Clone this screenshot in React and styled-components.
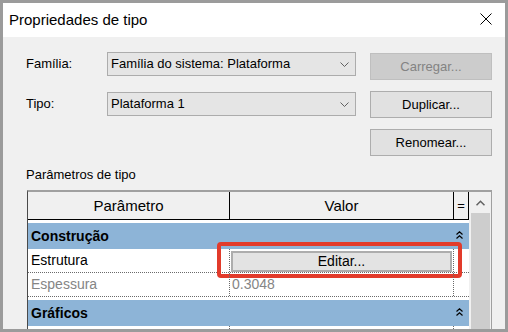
import React from 'react';
import styled, { createGlobalStyle } from 'styled-components';

const GlobalStyle = createGlobalStyle`
  html, body { margin: 0; padding: 0; background: #ffffff; }
  body { font-family: "Liberation Sans", Arial, sans-serif; }
  *, *::before, *::after { box-sizing: border-box; }
`;

const Window = styled.div`
  width: 508px;
  height: 332px;
  border: 3px solid #9b9b9b;
  background: #f0f0f0;
  display: flex;
  flex-direction: column;
  overflow: hidden;
  color: #000;
`;

const TitleBar = styled.div`
  height: 34px;
  flex: none;
  background: #ffffff;
  display: flex;
  align-items: center;
  justify-content: space-between;
  padding: 0 13px 0 6px;
`;

const Title = styled.span`
  font-size: 15px;
  line-height: 34px;
`;

const CloseIcon = styled.svg`
  width: 12px;
  height: 12px;
  display: block;
  margin-top: -2px;
`;

const Body = styled.div`
  flex: 1;
  min-height: 0;
  overflow: hidden;
  padding: 0 13px 0 23px;
`;

const TopArea = styled.div`
  display: flex;
  align-items: flex-start;
`;

const FieldGrid = styled.div`
  display: grid;
  grid-template-columns: 81px 249px;
  row-gap: 16px;
  padding-top: 15px;
  align-items: center;
`;

const FieldLabel = styled.span`
  font-size: 13px;
  line-height: 16px;
`;

const Select = styled.div`
  height: 24px;
  border: 1px solid #acacac;
  background: #e5e5e5;
  display: flex;
  align-items: center;
  justify-content: space-between;
  padding: 0 6px 0 3px;
  font-size: 13px;
  line-height: 16px;
`;

const Chevron = styled.svg`
  width: 9px;
  height: 5px;
  display: block;
`;

const ButtonColumn = styled.div`
  margin-left: 14px;
  padding-top: 16px;
  display: flex;
  flex-direction: column;
  gap: 11px;
  width: 124px;
`;

const DialogButton = styled.button`
  height: 27px;
  width: 100%;
  padding: 0;
  border: 1px solid ${(p) => (p.disabled ? '#bfbfbf' : '#adadad')};
  background: ${(p) => (p.disabled ? '#cccccc' : '#e1e1e1')};
  color: ${(p) => (p.disabled ? '#838383' : '#000000')};
  font-family: "Liberation Sans", Arial, sans-serif;
  font-size: 13px;
  line-height: 16px;
`;

const SectionLabel = styled.div`
  margin-top: 11px;
  font-size: 13px;
  line-height: 16px;
`;

const Table = styled.div`
  margin: 7px 0 0 1px;
  width: 465px;
  height: 200px;
  border-top: 2px solid #a0a0a0;
  border-left: 1px solid #4a4a4a;
  border-right: 1px solid #a0a0a0;
  display: flex;
  background: #ffffff;
`;

const Grid = styled.div`
  width: 441px;
  flex: none;
  background: #ffffff;
`;

const COLS = '202px 224px 15px';

const HeaderRow = styled.div`
  display: grid;
  grid-template-columns: ${COLS};
  height: 28px;
  border-bottom: 1px solid #000;
  background: #f0f0f0;
`;

const HeaderCell = styled.div`
  display: flex;
  align-items: center;
  justify-content: center;
  font-size: ${(p) => (p.small ? '13px' : '15px')};
  border-right: 1px solid #000;
`;

const GroupRow = styled.div`
  margin-top: 3px;
  height: 26px;
  background: #8db4d7;
  display: flex;
  align-items: center;
  justify-content: space-between;
  padding: 0 6px 0 3px;
  font-size: 14px;
  font-weight: bold;
`;

const CollapseIcon = styled.svg`
  width: 7px;
  height: 8px;
  display: block;
  margin-top: -2px;
`;

const DataRow = styled.div`
  position: relative;
  display: grid;
  grid-template-columns: ${COLS};
  height: 24px;
  border-bottom: 1px dotted #6a6a6a;
`;

const DataCell = styled.div`
  font-size: 14px;
  line-height: 23px;
  white-space: nowrap;
  overflow: hidden;
  color: ${(p) => (p.muted ? '#858585' : '#000000')};
  padding: ${(p) => p.pad || '0'};
  border-right: ${(p) => (p.last ? 'none' : '1px dotted #6a6a6a')};
`;

const EditButton = styled.button`
  width: 100%;
  height: 21px;
  padding: 0;
  border: 2px solid #adadad;
  background: #e3e3e3;
  font-family: "Liberation Sans", Arial, sans-serif;
  font-size: 14px;
  line-height: 16px;
  color: #000;
`;

const Highlight = styled.div`
  position: absolute;
  left: 189px;
  top: -7px;
  width: 245px;
  height: 36px;
  border: 4px solid #e23b2b;
  border-radius: 4px;
  pointer-events: none;
`;

const Scrollbar = styled.div`
  width: 22px;
  flex: none;
  background: #f0f0f0;
  display: flex;
  flex-direction: column;
`;

const ScrollArrow = styled.div`
  height: 21px;
  display: flex;
  align-items: center;
  justify-content: center;
  padding-left: 1px;
`;

const ScrollThumb = styled.div`
  margin: 0 1px 0 2px;
  flex: 1;
  background: #cdcdcd;
`;

const Caret = () => (
  <CollapseIcon viewBox="0 0 7 8">
    <polyline points="0.5,3.5 3.5,0.8 6.5,3.5" fill="none" stroke="#000" strokeWidth="1.2" />
    <polyline points="0.5,7.5 3.5,4.8 6.5,7.5" fill="none" stroke="#000" strokeWidth="1.2" />
  </CollapseIcon>
);

const DropChevron = () => (
  <Chevron viewBox="0 0 9 5">
    <polyline points="0.5,0.5 4.5,4.5 8.5,0.5" fill="none" stroke="#606060" strokeWidth="1" />
  </Chevron>
);

export default function App() {
  return (
    <>
      <GlobalStyle />
      <Window>
        <TitleBar>
          <Title>Propriedades de tipo</Title>
          <CloseIcon viewBox="0 0 12 12">
            <line x1="0.5" y1="0.5" x2="11.5" y2="11.5" stroke="#000" strokeWidth="1" />
            <line x1="11.5" y1="0.5" x2="0.5" y2="11.5" stroke="#000" strokeWidth="1" />
          </CloseIcon>
        </TitleBar>
        <Body>
          <TopArea>
            <FieldGrid>
              <FieldLabel>Família:</FieldLabel>
              <Select>
                <span>Família do sistema: Plataforma</span>
                <DropChevron />
              </Select>
              <FieldLabel>Tipo:</FieldLabel>
              <Select>
                <span>Plataforma 1</span>
                <DropChevron />
              </Select>
            </FieldGrid>
            <ButtonColumn>
              <DialogButton disabled>Carregar...</DialogButton>
              <DialogButton>Duplicar...</DialogButton>
              <DialogButton>Renomear...</DialogButton>
            </ButtonColumn>
          </TopArea>
          <SectionLabel>Parâmetros de tipo</SectionLabel>
          <Table>
            <Grid>
              <HeaderRow>
                <HeaderCell>Parâmetro</HeaderCell>
                <HeaderCell>Valor</HeaderCell>
                <HeaderCell small>=</HeaderCell>
              </HeaderRow>
              <GroupRow>
                <span>Construção</span>
                <Caret />
              </GroupRow>
              <DataRow>
                <DataCell pad="0 0 0 3px">Estrutura</DataCell>
                <DataCell pad="1px 1px 0 1px">
                  <EditButton>Editar...</EditButton>
                </DataCell>
                <DataCell last />
                <Highlight />
              </DataRow>
              <DataRow>
                <DataCell muted pad="0 0 0 3px">Espessura</DataCell>
                <DataCell muted pad="0 0 0 2px">0.3048</DataCell>
                <DataCell last />
              </DataRow>
              <GroupRow>
                <span>Gráficos</span>
                <Caret />
              </GroupRow>
              <DataRow>
                <DataCell pad="0 0 0 3px" />
                <DataCell />
                <DataCell last />
              </DataRow>
            </Grid>
            <Scrollbar>
              <ScrollArrow>
                <svg width="9" height="6" viewBox="0 0 9 6">
                  <polyline points="0.5,5.2 4.5,1.2 8.5,5.2" fill="none" stroke="#606060" strokeWidth="1.5" />
                </svg>
              </ScrollArrow>
              <ScrollThumb />
            </Scrollbar>
          </Table>
        </Body>
      </Window>
    </>
  );
}
